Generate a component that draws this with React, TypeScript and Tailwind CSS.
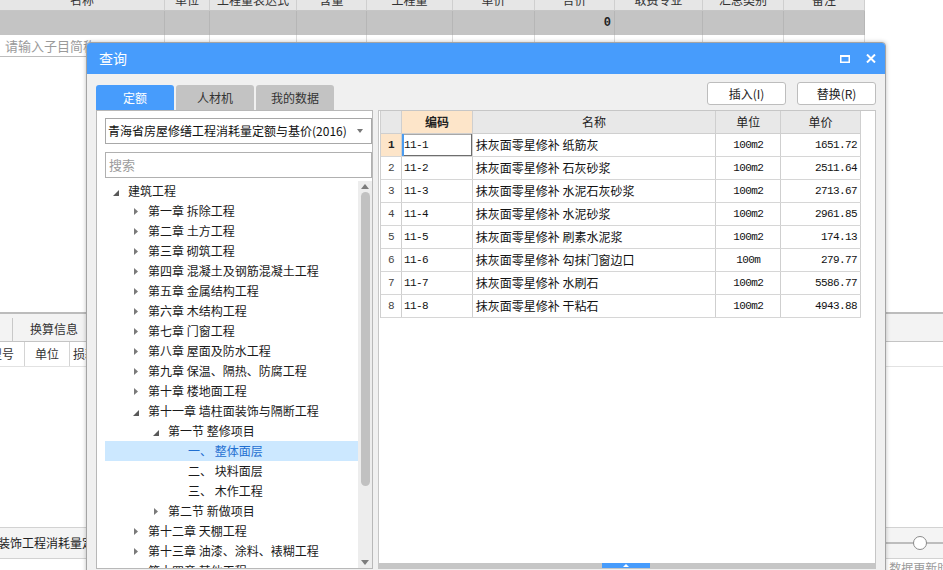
import React from "react";

const bgCols = [
  { w: "w-[165px]", t: "名称" },
  { w: "w-[45px]", t: "单位" },
  { w: "w-[87px]", t: "工程量表达式" },
  { w: "w-[70px]", t: "含量" },
  { w: "w-[86px]", t: "工程量" },
  { w: "w-[82px]", t: "单价" },
  { w: "w-[80px]", t: "合价" },
  { w: "w-[88px]", t: "取费专业" },
  { w: "w-[81px]", t: "汇总类别" },
  { w: "w-[81px]", t: "备注" },
];

type TreeItem = { l: number; i: "e" | "c" | ""; t: string; s?: boolean };
const tree: TreeItem[] = [
  { l: 0, i: "e", t: "建筑工程" },
  { l: 1, i: "c", t: "第一章 拆除工程" },
  { l: 1, i: "c", t: "第二章 土方工程" },
  { l: 1, i: "c", t: "第三章 砌筑工程" },
  { l: 1, i: "c", t: "第四章 混凝土及钢筋混凝土工程" },
  { l: 1, i: "c", t: "第五章 金属结构工程" },
  { l: 1, i: "c", t: "第六章 木结构工程" },
  { l: 1, i: "c", t: "第七章 门窗工程" },
  { l: 1, i: "c", t: "第八章 屋面及防水工程" },
  { l: 1, i: "c", t: "第九章 保温、隔热、防腐工程" },
  { l: 1, i: "c", t: "第十章 楼地面工程" },
  { l: 1, i: "e", t: "第十一章 墙柱面装饰与隔断工程" },
  { l: 2, i: "e", t: "第一节 整修项目" },
  { l: 3, i: "", t: "一、 整体面层", s: true },
  { l: 3, i: "", t: "二、 块料面层" },
  { l: 3, i: "", t: "三、 木作工程" },
  { l: 2, i: "c", t: "第二节 新做项目" },
  { l: 1, i: "c", t: "第十二章 天棚工程" },
  { l: 1, i: "c", t: "第十三章 油漆、涂料、裱糊工程" },
  { l: 1, i: "c", t: "第十四章 其他工程" },
];
const levelPad = ["pl-[6px]", "pl-[26px]", "pl-[46px]", "pl-[66px]"];

const rows = [
  ["11-1", "抹灰面零星修补 纸筋灰", "100m2", "1651.72"],
  ["11-2", "抹灰面零星修补 石灰砂浆", "100m2", "2511.64"],
  ["11-3", "抹灰面零星修补 水泥石灰砂浆", "100m2", "2713.67"],
  ["11-4", "抹灰面零星修补 水泥砂浆", "100m2", "2961.85"],
  ["11-5", "抹灰面零星修补 刷素水泥浆", "100m2", "174.13"],
  ["11-6", "抹灰面零星修补 勾抹门窗边口", "100m", "279.77"],
  ["11-7", "抹灰面零星修补 水刷石", "100m2", "5586.77"],
  ["11-8", "抹灰面零星修补 干粘石", "100m2", "4943.88"],
];

const mono = "font-['Liberation_Mono','Noto_Sans_CJK_SC',monospace] text-[11px] tracking-[-0.6px]";

function TreeIcon({ kind }: { kind: "e" | "c" | "" }) {
  if (kind === "e")
    return (
      <svg width="6" height="6" viewBox="0 0 6 6" className="mt-[3px]">
        <polygon points="6,0 6,6 0,6" fill="#595959" />
      </svg>
    );
  if (kind === "c")
    return (
      <svg width="4" height="7" viewBox="0 0 4 7">
        <polygon points="0,0 4,3.5 0,7" fill="#7a7a7a" />
      </svg>
    );
  return null;
}

export default function App() {
  return (
    <div className="relative w-[943px] h-[570px] overflow-hidden bg-white font-['Noto_Sans_CJK_SC','Noto_Sans',sans-serif] text-[12px] text-[#222]">
      {/* background grid */}
      <div className="w-[865px]">
        <div className="flex h-[11px] bg-[#e6e6e6] border-b border-[#c6c6c6] overflow-hidden">
          {bgCols.map((c, i) => (
            <div key={i} className={`${c.w} shrink-0 border-r border-[#cfcfcf] overflow-hidden`}>
              <div className="mt-[-10px] leading-[20px] text-center text-[12px] text-[#333] whitespace-nowrap">{c.t}</div>
            </div>
          ))}
        </div>
        <div className="flex h-[24px] bg-[#c4c4c4]">
          {bgCols.map((c, i) => (
            <div key={i} className={`${c.w} shrink-0 border-r border-[#b6b6b6] flex items-center justify-end pr-[3px]`}>
              {i === 6 && <span className="font-['Liberation_Mono',monospace] text-[12px] font-bold text-[#222]">0</span>}
            </div>
          ))}
        </div>
        <div className="flex h-[22px] border-b border-[#bdbdbd]">
          {bgCols.map((c, i) => (
            <div key={i} className={`${c.w} shrink-0 border-r border-[#dcdcdc] flex items-center pl-[5px] overflow-hidden`}>
              {i === 0 && <span className="text-[13px] text-[#9a9a9a] whitespace-nowrap">请输入子目简称</span>}
            </div>
          ))}
        </div>
      </div>
      <div className="h-[255px]" />
      {/* lower tab bar */}
      <div className="flex h-[30px] border-t-2 border-[#bcbcbc] border-b border-b-[#c4c4c4] bg-[#f3f3f3]">
        <div className="w-[13px] border-r border-[#c8c8c8] mt-[4px]" />
        <div className="w-[82px] flex items-center justify-center text-[12px] text-[#333] mt-[2px]">换算信息</div>
      </div>
      <div className="flex h-[25px] border-b border-[#e2e2e2]">
        <div className="w-[25px] border-r border-[#d4d4d4] flex items-center justify-end pr-[10px] overflow-hidden whitespace-nowrap text-[#333]">型号</div>
        <div className="w-[45px] border-r border-[#d4d4d4] flex items-center justify-center text-[#333]">单位</div>
        <div className="w-[30px] flex items-center pl-[3px] text-[#333]">损耗</div>
      </div>
      <div className="h-[160px]" />
      <div className="flex h-[32px] border-t border-b border-[#d2d2d2] bg-[#f4f4f4] items-center justify-between">
        <div className="ml-[-2px] whitespace-nowrap text-[12px] text-[#222]">装饰工程消耗量定额与基价</div>
        <div className="relative w-[57px] h-[14px] flex items-center">
          <div className="w-full h-[2px] bg-[#bdbdbd]" />
          <div className="absolute left-[27px] top-0 w-[14px] h-[14px] rounded-full border border-[#8a8a8a] bg-white" />
        </div>
      </div>
      <div className="flex justify-end">
        <div className="w-[57px] overflow-hidden whitespace-nowrap text-[12px] leading-[16px] text-[#9a9a9a] mt-[1px]">.数据更新时间</div>
      </div>

      {/* dialog */}
      <div className="absolute left-[86px] top-[42px] w-[800px] h-[540px] border border-[#a4a4a4] rounded-t-[4px] bg-[#f0f0f0] overflow-hidden shadow-[0_0_4px_rgba(0,0,0,0.25)]">
        <div className="h-[31px] bg-[#479cfc] flex items-center justify-between pl-[12px] pr-[9px]">
          <span className="text-white text-[14px]">查询</span>
          <div className="flex items-center gap-[16px]">
            <svg width="10" height="8" viewBox="0 0 10 8">
              <rect x="0.75" y="1" width="8.5" height="6.25" fill="none" stroke="white" strokeWidth="1.5" />
              <rect x="0" y="0" width="10" height="2" fill="white" />
            </svg>
            <svg width="10" height="9" viewBox="0 0 10 9">
              <path d="M1 0.5 L9 8.5 M9 0.5 L1 8.5" stroke="white" strokeWidth="2" />
            </svg>
          </div>
        </div>
        <div className="flex pl-[9px] pr-[9px] gap-[5px]">
          {/* left column */}
          <div className="w-[277px] pt-[11px]">
            <div className="flex h-[25px] gap-[2px]">
              <div className="w-[78px] rounded-t-[3px] bg-[#479cfc] text-white flex items-center justify-center text-[12px]">定额</div>
              <div className="w-[78px] rounded-t-[3px] bg-[#c3c3c3] text-[#333] flex items-center justify-center text-[12px]">人材机</div>
              <div className="w-[78px] rounded-t-[3px] bg-[#c3c3c3] text-[#333] flex items-center justify-center text-[12px]">我的数据</div>
            </div>
            <div className="h-[459px] border border-[#b8b8b8] bg-white pl-[8px] pt-[7px] overflow-hidden">
              <div className="h-[26px] border border-[#a8a8a8] flex items-center justify-between pl-[2px] pr-[8px]">
                <span className="text-[12px] text-[#111] whitespace-nowrap">青海省房屋修缮工程消耗量定额与基价(2016)</span>
                <svg width="6" height="4" viewBox="0 0 6 4">
                  <polygon points="0,0 6,0 3,4" fill="#777" />
                </svg>
              </div>
              <div className="mt-[8px] h-[26px] border border-[#b0b0b0] flex items-center pl-[3px]">
                <span className="text-[13px] text-[#9c9c9c]">搜索</span>
              </div>
              <div className="mt-[3px] flex h-[400px]">
                <div className="w-[253px] overflow-hidden">
                  {tree.map((it, idx) => (
                    <div
                      key={idx}
                      className={`h-[20px] flex items-center ${levelPad[it.l]} ${it.s ? "bg-[#cce8ff] text-[#1f6fd1]" : "text-[#1a1a1a]"}`}
                    >
                      <div className="w-[10px] flex justify-center">
                        <TreeIcon kind={it.i} />
                      </div>
                      <span className="ml-[7px] whitespace-nowrap text-[12px]">{it.t}</span>
                    </div>
                  ))}
                </div>
                <div className="w-[14px] h-[387px] bg-[#ededed] flex flex-col items-center">
                  <svg width="8" height="5" viewBox="0 0 8 5" className="mt-[3px]">
                    <polygon points="0,5 8,5 4,0" fill="#7c7c7c" />
                  </svg>
                  <div className="mt-[3px] w-[9px] h-[294px] rounded-full bg-[#c1c1c1]" />
                  <div className="flex-1" />
                  <svg width="8" height="5" viewBox="0 0 8 5" className="mb-[3px]">
                    <polygon points="0,0 8,0 4,5" fill="#7c7c7c" />
                  </svg>
                </div>
              </div>
            </div>
          </div>
          {/* right column */}
          <div className="w-[498px] pt-[8px]">
            <div className="flex h-[23px] justify-end gap-[11px]">
              <button className="w-[79px] h-[23px] bg-white border border-[#bdbdbd] rounded-[3px] text-[12px] text-[#222]">插入(I)</button>
              <button className="w-[79px] h-[23px] bg-white border border-[#bdbdbd] rounded-[3px] text-[12px] text-[#222]">替换(R)</button>
            </div>
            <div className="mt-[5px] h-[459px] border border-[#c6c6c6] bg-white flex flex-col">
              <div className="ml-px w-[481px] border-l border-[#cfcfcf]">
                <div className="flex h-[23px] border-b border-[#cfcfcf] bg-[#e8e8e8] text-[12px] text-[#222]">
                  <div className="w-[21px] border-r border-[#cfcfcf]" />
                  <div className="w-[71px] border-r border-[#cfcfcf] bg-[#fde5c9] flex items-center justify-center font-bold">编码</div>
                  <div className="w-[244px] border-r border-[#cfcfcf] flex items-center justify-center">名称</div>
                  <div className="w-[65px] border-r border-[#cfcfcf] flex items-center justify-center">单位</div>
                  <div className="w-[80px] border-r border-[#cfcfcf] flex items-center justify-center">单价</div>
                </div>
                {rows.map((r, i) => (
                  <div key={i} className="flex h-[23px] border-b border-[#d6d6d6] text-[#111]">
                    <div
                      className={`w-[21px] border-r border-[#cfcfcf] flex items-center justify-center ${mono} ${
                        i === 0 ? "bg-[#fde5c9] font-bold text-[#222]" : "text-[#444]"
                      }`}
                    >
                      {i + 1}
                    </div>
                    <div
                      className={`w-[71px] border-r border-[#cfcfcf] flex items-center pl-[2px] ${mono} ${
                        i === 0 ? "shadow-[inset_2px_0_0_#4b9cf0,inset_-1px_-1px_0_#6e6e6e,inset_0_1px_0_#a8a8a8]" : ""
                      }`}
                    >
                      {r[0]}
                    </div>
                    <div className="w-[244px] border-r border-[#cfcfcf] flex items-center pl-[3px] text-[12px] whitespace-nowrap">{r[1]}</div>
                    <div className={`w-[65px] border-r border-[#cfcfcf] flex items-center justify-center ${mono}`}>{r[2]}</div>
                    <div className={`w-[80px] border-r border-[#cfcfcf] flex items-center justify-end pr-[3px] ${mono}`}>{r[3]}</div>
                  </div>
                ))}
              </div>
              <div className="flex-1" />
              <div className="h-[5px] bg-[#c6c6c6] flex">
                <div className="ml-[223px] w-[48px] h-[5px] bg-[#479cfc] flex justify-center items-center">
                  <svg width="6" height="3" viewBox="0 0 6 3">
                    <polygon points="0,3 6,3 3,0" fill="white" />
                  </svg>
                </div>
              </div>
            </div>
          </div>
        </div>
      </div>
    </div>
  );
}
